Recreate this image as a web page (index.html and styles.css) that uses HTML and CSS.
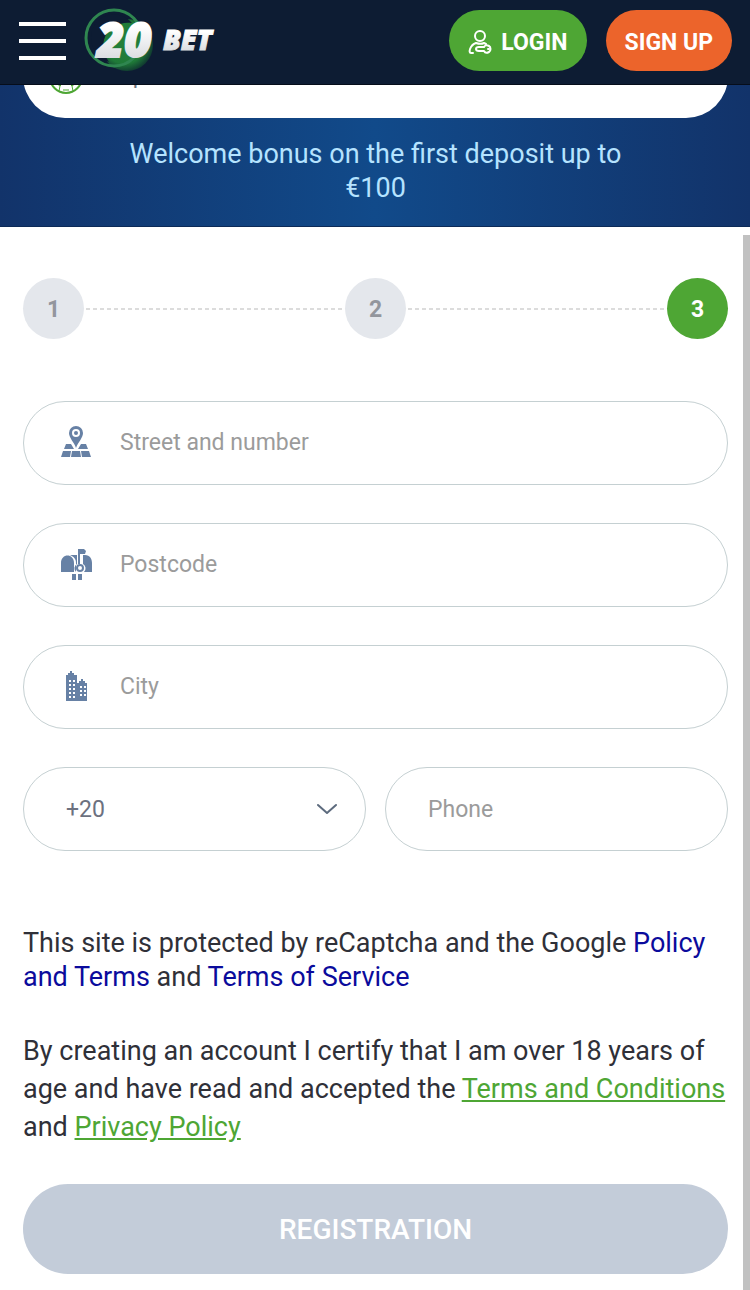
FILE: index.html
```html
<!DOCTYPE html>
<html lang="en">
<head>
  <meta charset="UTF-8" />
  <meta name="viewport" content="width=device-width, initial-scale=1.0"/>
  <title>20Bet - Registration</title>
  <link rel="stylesheet" href="styles.css">
</head>
<body>

  <header class="header">
    <button class="menu" type="button" aria-label="Menu">
      <span></span>
      <span></span>
      <span></span>
    </button>
    <a class="logo" href="#" aria-label="20Bet">
      <svg width="136" height="68" viewBox="0 0 136 68">
        <defs>
          <radialGradient id="ball" cx="45%" cy="45%" r="58%">
            <stop offset="0" stop-color="#24803a"/>
            <stop offset="0.7" stop-color="#1f7a38"/>
            <stop offset="1" stop-color="#0f3530"/>
          </radialGradient>
          <linearGradient id="steel" x1="0" y1="0" x2="0" y2="1">
            <stop offset="0.3" stop-color="#ffffff"/>
            <stop offset="1" stop-color="#cdd0d6"/>
          </linearGradient>
        </defs>
        <circle cx="43" cy="38" r="26" fill="url(#ball)"/>
        <path d="M7 31a23 23 0 0 1 41-15c-12-2-25 5-28 17-2 8 0 15 5 22-10-3-18-12-18-24z" fill="#0d1c33"/>
        <circle cx="30" cy="31" r="28" fill="none" stroke="#2f8650" stroke-width="3"/>
        <text class="logo-num" x="13" y="50" fill="url(#steel)" stroke="url(#steel)">20</text>
        <text class="logo-word" x="79" y="43" fill="url(#steel)" stroke="url(#steel)">BET</text>
      </svg>
    </a>
    <nav class="header-actions">
      <button class="btn btn-login" type="button">
        <svg width="24" height="26" viewBox="0 0 24 26" fill="none" stroke="#fff" stroke-width="2" stroke-linecap="round" stroke-linejoin="round">
          <circle cx="12" cy="7" r="5"/>
          <path d="M5 24H3c-3 0-1-8 5-10 3 1 6 1 8 0l2 1"/>
          <path d="M16 18h-5c-4 0-4 4 0 4h3l2 0c1 2 3 2 5 1 2-1 2-5 0-6-2-1-4-1-5 1z"/>
          <path d="M20 20h1"/>
        </svg>
        LOGIN
      </button>
      <button class="btn btn-signup" type="button">SIGN UP</button>
    </nav>
  </header>

  <section class="hero">
    <div class="bonus">
      <svg width="34" height="34" viewBox="0 0 34 34" fill="none" stroke="#4ea634" stroke-width="1">
        <circle cx="17" cy="17" r="16" stroke-width="2"/>
        <path d="M12 13l5-4 5 4-2 6h-6zM17 9V3M12 13l-7-2M22 13l7-2M14 19l-2 5M20 19l2 5"/>
        <path d="M2 22l5 1 4 3-1 5M32 22l-5 1-4 3 1 5M11 26l2-2h8l2 2M14 30h6"/>
      </svg>
      <span>Sports</span>
    </div>
    <p class="hero-text">Welcome bonus on the first deposit up to €100</p>
  </section>

  <main class="main">
    <div class="scrollbar"></div>

    <ol class="steps">
      <li class="step">1</li>
      <li class="line"></li>
      <li class="step">2</li>
      <li class="line"></li>
      <li class="step active">3</li>
    </ol>

    <form class="form">
      <label class="field">
        <svg width="32" height="34" viewBox="0 0 32 34" fill="#6781a5">
          <path fill-rule="evenodd" d="M15 1a7 7 0 0 1 7 7c0 5-5 9-7 15-2-6-7-10-7-15a7 7 0 0 1 7-7zm0 3a4 4 0 1 0 0 8 4 4 0 0 0 0-8z"/>
          <circle cx="15" cy="8" r="2"/>
          <path d="M5 19h5l3 5H3zM20 19h5l2 5H17zM2 26h8l-1 6H0zM11 26h8l1 6H10zM20 26h8l2 6h-9z"/>
        </svg>
        <input type="text" placeholder="Street and number" aria-label="Street and number">
      </label>

      <label class="field">
        <svg width="32" height="34" viewBox="0 0 32 34" fill="#6781a5">
          <path d="M0 25V16c0-10 13-10 13 0v9zM9 8h7v9a5 5 0 0 0-1 8h0V16c0-4-2-6-6-8zM22 8h2c5 0 7 4 7 8v9h-8a5 5 0 0 0-1-8z"/>
          <path d="M17 2h6l2 2-1 3h-5v10h-2zM11 27h4v6h-4zM17 27h4v6h-4z"/>
          <circle cx="19" cy="21" r="3" fill="#fff" stroke="#6781a5" stroke-width="2"/>
        </svg>
        <input type="text" placeholder="Postcode" aria-label="Postcode">
      </label>

      <label class="field">
        <svg width="32" height="34" viewBox="0 0 32 34">
          <path fill="#6781a5" d="M5 32V6h2V4h2V2h2v2h2v2h3v8h2v-2h2v-2h2v2h2v2h2v18z"/>
          <path stroke="#fff" stroke-width="2" stroke-dasharray="2 2" d="M9 11v18M13 11v18M20 17v12M24 17v12"/>
        </svg>
        <input type="text" placeholder="City" aria-label="City">
      </label>

      <div class="row">
        <div class="field field-code">
          <select aria-label="Country code">
            <option>+20</option>
          </select>
          <svg width="20" height="12" viewBox="0 0 20 12" fill="none" stroke="#5d6b7e" stroke-width="2" stroke-linecap="round" stroke-linejoin="round">
            <path d="M1 2l9 8 9-8"/>
          </svg>
        </div>
        <div class="field field-phone">
          <input type="tel" placeholder="Phone" aria-label="Phone">
        </div>
      </div>

      <p class="captcha">This site is protected by reCaptcha and the Google <a href="#">Policy and Terms</a> and <a href="#">Terms of Service</a></p>
      <p class="agree">By creating an account I certify that I am over 18 years of age and have read and accepted the <a href="#">Terms and Conditions</a> and <a href="#">Privacy Policy</a></p>

      <button class="submit" type="submit">REGISTRATION</button>
    </form>
  </main>

</body>
</html>
```

FILE: styles.css
```css
* {
  box-sizing: border-box;
}
body {
  font-family: Roboto, "Liberation Sans", sans-serif;
  background: #fff;
  color: #2f3038;
  margin: 0;
}
button, input, select {
  font-family: inherit;
}

/* header */
.header {
  display: flex;
  align-items: center;
  height: 85px;
  padding: 0 18px 3px 19px;
  background: #0d1c33;
  border-bottom: 1px solid #060d1a;
}
.menu {
  display: flex;
  flex-direction: column;
  gap: 13px;
  width: 47px;
  padding: 0;
  border: 0;
  background: none;
}
.menu span {
  height: 4px;
  background: #fff;
}
.logo {
  display: flex;
  margin-left: 18px;
}
.logo-num,
.logo-word {
  font-family: "Open Sans", sans-serif;
  font-weight: 800;
  font-style: italic;
}
.logo-num {
  font-size: 47px;
  stroke-width: 2px;
}
.logo-word {
  font-size: 28px;
  stroke-width: 1px;
}
.header-actions {
  display: flex;
  gap: 19px;
  margin-left: auto;
}
.btn {
  display: flex;
  align-items: center;
  gap: 9px;
  height: 61px;
  padding: 3px 19px 0;
  border: 0;
  border-radius: 31px;
  color: #fff;
  font-size: 23px;
  font-weight: 700;
}
.btn-login {
  background: #4ea634;
}
.btn-signup {
  background: #ec642b;
}

/* bonus banner */
.hero {
  overflow: hidden;
  padding: 0 22px 21px 23px;
  background: linear-gradient(90deg, #12336a, #114a8a 50%, #12336a);
  border-bottom: 1px solid #0c2a57;
}
.bonus {
  display: flex;
  align-items: center;
  gap: 36px;
  height: 84px;
  margin-top: -51px;
  padding: 2px 26px 0;
  border-radius: 42px;
  background: #fff;
  color: #6f7480;
  font-size: 23px;
}
.bonus span {
  margin-top: -4px;
}
.hero-text {
  max-width: 520px;
  margin: 19px auto 0;
  color: #b5e3ff;
  font-size: 27px;
  line-height: 34px;
  text-align: center;
}

/* registration form */
.main {
  position: relative;
  padding: 51px 22px 18px 23px;
}
.scrollbar {
  position: absolute;
  top: 8px;
  right: 0;
  bottom: 0;
  width: 7px;
  background: #c1c1c1;
}
.steps {
  display: flex;
  align-items: center;
  margin: 0 0 62px;
  padding: 0;
  list-style: none;
}
.step {
  display: flex;
  align-items: center;
  justify-content: center;
  width: 61px;
  height: 61px;
  padding-top: 2px;
  border-radius: 50%;
  background: #e4e7ec;
  color: #93969d;
  font-size: 23px;
  font-weight: 700;
}
.step.active {
  background: #4ea634;
  color: #fff;
}
.line {
  flex: 1;
  height: 2px;
  margin: 0 2px;
  background: repeating-linear-gradient(90deg, #dcdcdc 0 4px, transparent 4px 7px);
}
.form {
  display: flex;
  flex-direction: column;
  gap: 38px;
}
.field {
  display: flex;
  align-items: center;
  gap: 27px;
  min-width: 0;
  height: 84px;
  padding: 0 37px 2px;
  border: 1px solid #c5d0d2;
  border-radius: 42px;
}
.field svg {
  flex: none;
}
.field input,
.field select {
  flex: 1;
  min-width: 0;
  padding: 0;
  border: 0;
  outline: 0;
  background: none;
  color: #6c717f;
  font-size: 23px;
}
.field select {
  appearance: none;
}
.field input::placeholder {
  color: #9b9b9b;
}
.row {
  display: grid;
  grid-template-columns: 1fr 1fr;
  gap: 19px;
}
.field-code {
  padding: 0 28px 0 42px;
}
.field-phone {
  padding: 0 42px;
}
.captcha,
.agree {
  margin: 0;
  font-size: 27px;
}
.captcha {
  margin-top: 37px;
  line-height: 34px;
}
.captcha a {
  color: #0b0b9c;
  text-decoration: none;
}
.agree {
  line-height: 38px;
}
.agree a {
  color: #4ea634;
}
.submit {
  height: 90px;
  border: 0;
  border-radius: 45px;
  background: #c3ccd9;
  color: #fff;
  font-size: 28px;
  font-weight: 500;
}
```
